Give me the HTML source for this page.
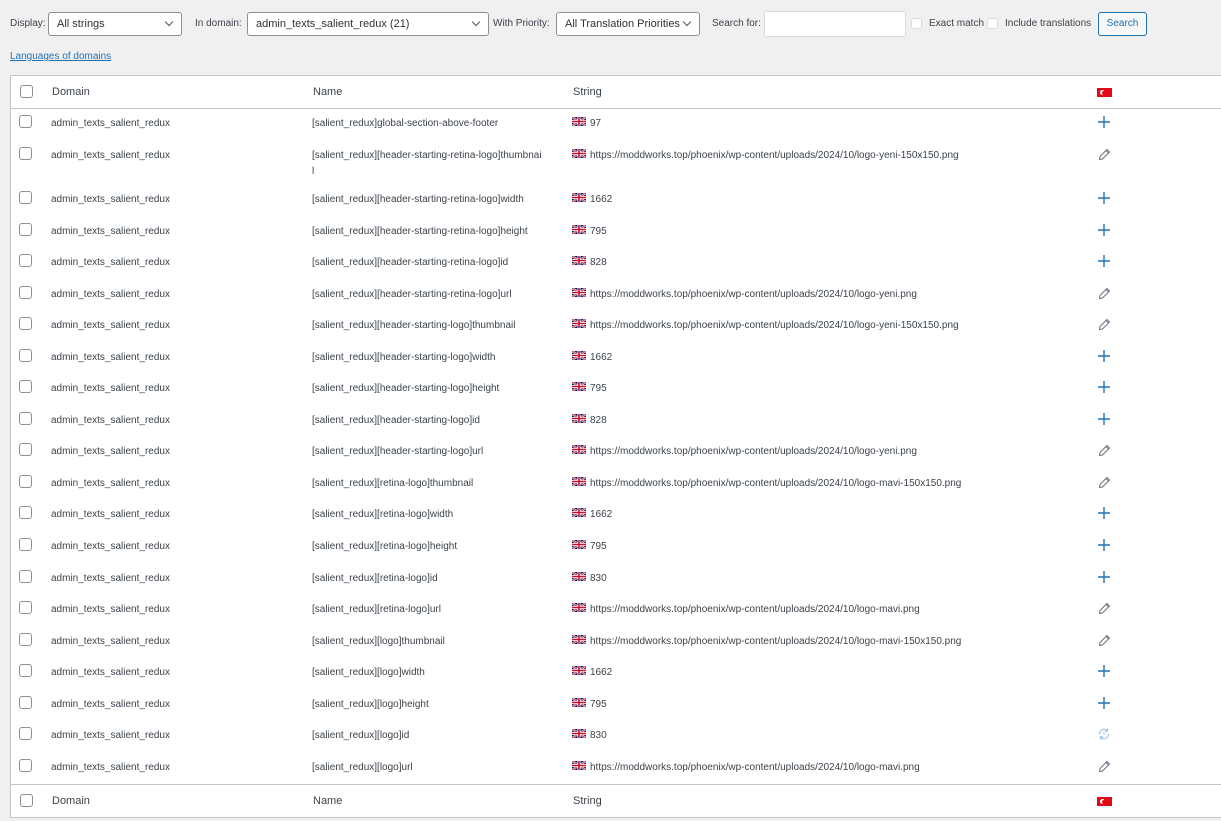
<!DOCTYPE html>
<html><head><meta charset="utf-8">
<style>
*{margin:0;padding:0;box-sizing:border-box}
body{width:1221px;height:821px;background:#f0f0f1;font-family:"Liberation Sans",sans-serif;color:#3c434a;position:relative;overflow:hidden}
.a{position:absolute;white-space:nowrap}
.lbl{font-size:10px;color:#3c434a;top:18px}
.sel{position:absolute;top:12px;height:24px;border:1px solid #8c8f94;border-radius:3px;background:#fff;font-size:11px;padding:5px 8px;color:#2c3338}
.sel:after{content:"";position:absolute;right:9px;top:6px;width:5px;height:5px;border-right:1.3px solid #50575e;border-bottom:1.3px solid #50575e;transform:rotate(45deg)}
.cbx{position:absolute;width:11px;height:11px;border:1px solid #dcdcde;border-radius:3px;background:#fff;top:18px}
#tbl{position:absolute;left:10px;top:75px;width:1220px;height:743px;background:#fff;border:1px solid #c3c4c7}
.hl{position:absolute;left:0;right:0;height:1px;background:#c3c4c7}
.row{position:absolute;left:0;height:16px;width:1220px;font-size:10px;line-height:16px}
.row .cb{position:absolute;left:9px;top:1px;width:13px;height:13px;border:1px solid #8c8f94;border-radius:3px;background:#fff}
.row .d,.row .n,.row .s{top:2px}
.h .d,.h .n,.h .s{top:0}
.row .d{position:absolute;left:41px}
.row .n{position:absolute;left:302px}
.row .s{position:absolute;left:562px}
.row .i{position:absolute;left:1087px;top:0;width:14px;height:16px}
.h{font-size:11px}
.uk{display:inline-block;width:14px;height:9px;vertical-align:0;margin-right:4px}
.tr{position:absolute;left:1086px;top:4px;width:15px;height:9px;background:#e30a17}
.tr:before{content:"";position:absolute;left:3px;top:2px;width:5px;height:5px;border-radius:50%;background:#fff}
.tr:after{content:"";position:absolute;left:4.5px;top:2.5px;width:4px;height:4px;border-radius:50%;background:#e30a17}
</style></head><body>
<div class="a lbl" style="left:10px">Display:</div>
<div class="sel" style="left:48px;width:134px">All strings</div>
<div class="a lbl" style="left:195px">In domain:</div>
<div class="sel" style="left:247px;width:242px">admin_texts_salient_redux (21)</div>
<div class="a lbl" style="left:493px">With Priority:</div>
<div class="sel" style="left:556px;width:144px">All Translation Priorities</div>
<div class="a lbl" style="left:712px">Search for:</div>
<div class="a" style="left:764px;top:11px;width:142px;height:26px;border:1px solid #dcdcde;border-radius:3px;background:#fff"></div>
<div class="cbx" style="left:911px"></div>
<div class="a lbl" style="left:929px">Exact match</div>
<div class="cbx" style="left:987px"></div>
<div class="a lbl" style="left:1005px">Include translations</div>
<div class="a" style="left:1098px;top:12px;width:49px;height:24px;border:1px solid #2271b1;border-radius:3px;background:#f6f7f7;color:#2271b1;font-size:10px;text-align:center;line-height:22px">Search</div>
<div class="a" style="left:10px;top:51px;font-size:10px;color:#2271b1;text-decoration:underline">Languages of domains</div>

<div id="tbl">
<div class="hl" style="top:32px"></div>
<div class="hl" style="top:708px"></div>
<div class="row h" style="top:8px"><span class="cb"></span><span class="d">Domain</span><span class="n">Name</span><span class="s">String</span><span class="tr"></span></div>
<div class="row h" style="top:717px"><span class="cb"></span><span class="d">Domain</span><span class="n">Name</span><span class="s">String</span><span class="tr"></span></div>
</div>

<svg width="0" height="0" style="position:absolute">
<defs>
<symbol id="p" viewBox="0 0 14 16"><path d="M1 8H13M7 2V14" stroke="#2271b1" stroke-width="1.4" fill="none"/></symbol>
<symbol id="e" viewBox="0 0 14 16"><path d="M2.5 13.5L3 10.5L10 3.5L12.5 6L5.5 13Z M9 4.5L11.5 7" stroke="#6b7280" stroke-width="1" fill="none"/></symbol>
<symbol id="r" viewBox="0 0 14 16"><path d="M2.5 8A4.5 4.5 0 0 1 10.5 5M11.5 8A4.5 4.5 0 0 1 3.5 11M10.5 2.5V5.2H8M3.5 13.5V10.8H6M7 5.5V8.5" stroke="#9ec2e6" stroke-width="1.1" fill="none"/></symbol>
<symbol id="f" viewBox="0 0 14 9"><rect width="14" height="9" fill="#012169"/><path d="M0 0L14 9M14 0L0 9" stroke="#fff" stroke-width="2"/><path d="M0 0L14 9M14 0L0 9" stroke="#c8102e" stroke-width="0.8"/><path d="M7 0V9M0 4.5H14" stroke="#fff" stroke-width="3"/><path d="M7 0V9M0 4.5H14" stroke="#c8102e" stroke-width="1.6"/></symbol>
</defs></svg>

<div style="position:absolute;left:10px;top:0">
<div class="row" style="top:114px"><span class="cb"></span><span class="d">admin_texts_salient_redux</span><span class="n">[salient_redux]global-section-above-footer</span><span class="s"><svg class="uk"><use href="#f"/></svg>97</span><svg class="i"><use href="#p"/></svg></div>
<div class="row" style="top:146px"><span class="cb"></span><span class="d">admin_texts_salient_redux</span><span class="n">[salient_redux][header-starting-retina-logo]thumbnai<br>l</span><span class="s"><svg class="uk"><use href="#f"/></svg>https://moddworks.top/phoenix/wp-content/uploads/2024/10/logo-yeni-150x150.png</span><svg class="i"><use href="#e"/></svg></div>
<div class="row" style="top:190px"><span class="cb"></span><span class="d">admin_texts_salient_redux</span><span class="n">[salient_redux][header-starting-retina-logo]width</span><span class="s"><svg class="uk"><use href="#f"/></svg>1662</span><svg class="i"><use href="#p"/></svg></div>
<div class="row" style="top:222px"><span class="cb"></span><span class="d">admin_texts_salient_redux</span><span class="n">[salient_redux][header-starting-retina-logo]height</span><span class="s"><svg class="uk"><use href="#f"/></svg>795</span><svg class="i"><use href="#p"/></svg></div>
<div class="row" style="top:253px"><span class="cb"></span><span class="d">admin_texts_salient_redux</span><span class="n">[salient_redux][header-starting-retina-logo]id</span><span class="s"><svg class="uk"><use href="#f"/></svg>828</span><svg class="i"><use href="#p"/></svg></div>
<div class="row" style="top:285px"><span class="cb"></span><span class="d">admin_texts_salient_redux</span><span class="n">[salient_redux][header-starting-retina-logo]url</span><span class="s"><svg class="uk"><use href="#f"/></svg>https://moddworks.top/phoenix/wp-content/uploads/2024/10/logo-yeni.png</span><svg class="i"><use href="#e"/></svg></div>
<div class="row" style="top:316px"><span class="cb"></span><span class="d">admin_texts_salient_redux</span><span class="n">[salient_redux][header-starting-logo]thumbnail</span><span class="s"><svg class="uk"><use href="#f"/></svg>https://moddworks.top/phoenix/wp-content/uploads/2024/10/logo-yeni-150x150.png</span><svg class="i"><use href="#e"/></svg></div>
<div class="row" style="top:348px"><span class="cb"></span><span class="d">admin_texts_salient_redux</span><span class="n">[salient_redux][header-starting-logo]width</span><span class="s"><svg class="uk"><use href="#f"/></svg>1662</span><svg class="i"><use href="#p"/></svg></div>
<div class="row" style="top:379px"><span class="cb"></span><span class="d">admin_texts_salient_redux</span><span class="n">[salient_redux][header-starting-logo]height</span><span class="s"><svg class="uk"><use href="#f"/></svg>795</span><svg class="i"><use href="#p"/></svg></div>
<div class="row" style="top:411px"><span class="cb"></span><span class="d">admin_texts_salient_redux</span><span class="n">[salient_redux][header-starting-logo]id</span><span class="s"><svg class="uk"><use href="#f"/></svg>828</span><svg class="i"><use href="#p"/></svg></div>
<div class="row" style="top:442px"><span class="cb"></span><span class="d">admin_texts_salient_redux</span><span class="n">[salient_redux][header-starting-logo]url</span><span class="s"><svg class="uk"><use href="#f"/></svg>https://moddworks.top/phoenix/wp-content/uploads/2024/10/logo-yeni.png</span><svg class="i"><use href="#e"/></svg></div>
<div class="row" style="top:474px"><span class="cb"></span><span class="d">admin_texts_salient_redux</span><span class="n">[salient_redux][retina-logo]thumbnail</span><span class="s"><svg class="uk"><use href="#f"/></svg>https://moddworks.top/phoenix/wp-content/uploads/2024/10/logo-mavi-150x150.png</span><svg class="i"><use href="#e"/></svg></div>
<div class="row" style="top:505px"><span class="cb"></span><span class="d">admin_texts_salient_redux</span><span class="n">[salient_redux][retina-logo]width</span><span class="s"><svg class="uk"><use href="#f"/></svg>1662</span><svg class="i"><use href="#p"/></svg></div>
<div class="row" style="top:537px"><span class="cb"></span><span class="d">admin_texts_salient_redux</span><span class="n">[salient_redux][retina-logo]height</span><span class="s"><svg class="uk"><use href="#f"/></svg>795</span><svg class="i"><use href="#p"/></svg></div>
<div class="row" style="top:569px"><span class="cb"></span><span class="d">admin_texts_salient_redux</span><span class="n">[salient_redux][retina-logo]id</span><span class="s"><svg class="uk"><use href="#f"/></svg>830</span><svg class="i"><use href="#p"/></svg></div>
<div class="row" style="top:600px"><span class="cb"></span><span class="d">admin_texts_salient_redux</span><span class="n">[salient_redux][retina-logo]url</span><span class="s"><svg class="uk"><use href="#f"/></svg>https://moddworks.top/phoenix/wp-content/uploads/2024/10/logo-mavi.png</span><svg class="i"><use href="#e"/></svg></div>
<div class="row" style="top:632px"><span class="cb"></span><span class="d">admin_texts_salient_redux</span><span class="n">[salient_redux][logo]thumbnail</span><span class="s"><svg class="uk"><use href="#f"/></svg>https://moddworks.top/phoenix/wp-content/uploads/2024/10/logo-mavi-150x150.png</span><svg class="i"><use href="#e"/></svg></div>
<div class="row" style="top:663px"><span class="cb"></span><span class="d">admin_texts_salient_redux</span><span class="n">[salient_redux][logo]width</span><span class="s"><svg class="uk"><use href="#f"/></svg>1662</span><svg class="i"><use href="#p"/></svg></div>
<div class="row" style="top:695px"><span class="cb"></span><span class="d">admin_texts_salient_redux</span><span class="n">[salient_redux][logo]height</span><span class="s"><svg class="uk"><use href="#f"/></svg>795</span><svg class="i"><use href="#p"/></svg></div>
<div class="row" style="top:726px"><span class="cb"></span><span class="d">admin_texts_salient_redux</span><span class="n">[salient_redux][logo]id</span><span class="s"><svg class="uk"><use href="#f"/></svg>830</span><svg class="i"><use href="#r"/></svg></div>
<div class="row" style="top:758px"><span class="cb"></span><span class="d">admin_texts_salient_redux</span><span class="n">[salient_redux][logo]url</span><span class="s"><svg class="uk"><use href="#f"/></svg>https://moddworks.top/phoenix/wp-content/uploads/2024/10/logo-mavi.png</span><svg class="i"><use href="#e"/></svg></div>
</div>
</body></html>
